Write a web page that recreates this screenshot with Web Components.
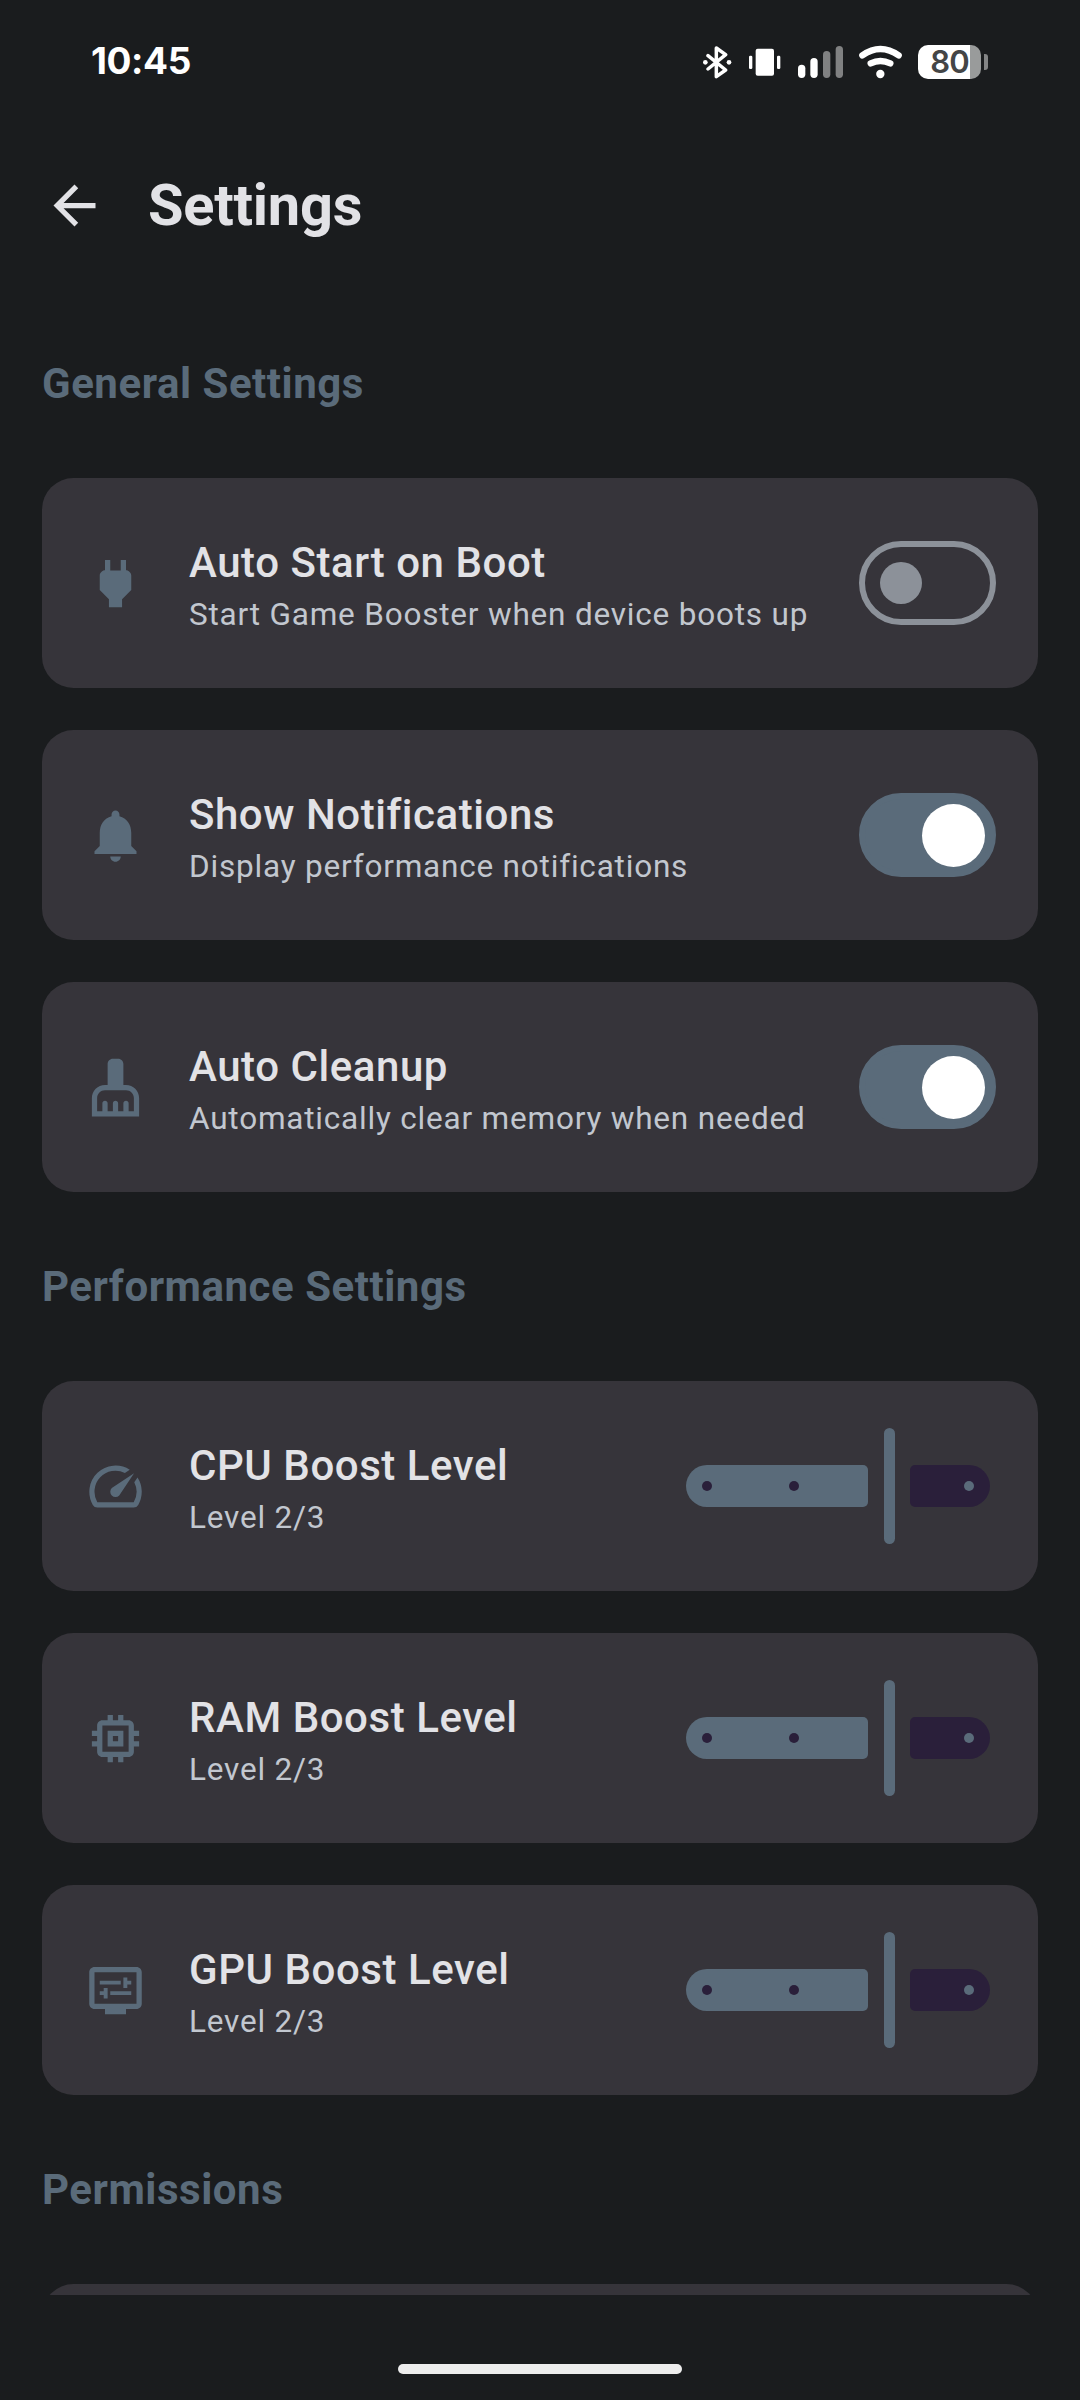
<!DOCTYPE html>
<html lang="en">
<head>
<meta charset="utf-8">
<title>Settings</title>
<style>
	body {
		margin: 0;
		background: #1a1c1e;
		font-family: Roboto, "Noto Sans", sans-serif;
		--primary: #5a6b7a;
		--surface: #1a1c1e;
		--card: #36343a;
		--text: #e2e2e6;
		--text-muted: #c2c7cf;
		--outline: #8c9199;
		--track: #2a1f3a;
	}
</style>
</head>
<body>
<settings-screen>
	<status-bar slot="status" time="10:45" battery="80"></status-bar>
	<app-bar slot="header">Settings</app-bar>

	<section-title>General Settings</section-title>
	<setting-card icon="power" label="Auto Start on Boot" detail="Start Game Booster when device boots up">
		<toggle-switch></toggle-switch>
	</setting-card>
	<setting-card icon="bell" label="Show Notifications" detail="Display performance notifications">
		<toggle-switch checked></toggle-switch>
	</setting-card>
	<setting-card icon="broom" label="Auto Cleanup" detail="Automatically clear memory when needed">
		<toggle-switch checked></toggle-switch>
	</setting-card>

	<section-title>Performance Settings</section-title>
	<setting-card icon="speed" label="CPU Boost Level" detail="Level 2/3">
		<level-slider></level-slider>
	</setting-card>
	<setting-card icon="memory" label="RAM Boost Level" detail="Level 2/3">
		<level-slider></level-slider>
	</setting-card>
	<setting-card icon="display" label="GPU Boost Level" detail="Level 2/3">
		<level-slider></level-slider>
	</setting-card>

	<section-title>Permissions</section-title>
	<setting-card></setting-card>
</settings-screen>

<script>
const ICONS = {
	back: "M20 11H7.83l5.59-5.59L12 4l-8 8 8 8 1.41-1.41L7.83 13H20v-2z",
	power: "M16.01 7L16 3h-2v4h-4V3H8v4h-.01C7 6.99 6 7.99 6 8.99v5.49L9.5 18v3h5v-3l3.5-3.51v-5.5c0-1-1-2-1.99-1.99z",
	bell: "M12 22c1.1 0 2-.9 2-2h-4c0 1.1.89 2 2 2zm6-6v-5c0-3.07-1.64-5.64-4.5-6.32V4c0-.83-.67-1.5-1.5-1.5s-1.5.67-1.5 1.5v.68C7.63 5.36 6 7.92 6 11v5l-2 2v1h16v-1l-2-2z",
	broom: "M16 11h-1V3c0-1.1-.9-2-2-2h-2c-1.1 0-2 .9-2 2v8H8c-2.76 0-5 2.24-5 5v7h18v-7c0-2.76-2.24-5-5-5zm3 10h-2v-3c0-.55-.45-1-1-1s-1 .45-1 1v3h-2v-3c0-.55-.45-1-1-1s-1 .45-1 1v3H9v-3c0-.55-.45-1-1-1s-1 .45-1 1v3H5v-5c0-1.65 1.35-3 3-3h8c1.65 0 3 1.35 3 3v5z",
	speed: "M20.38 8.57l-1.23 1.85a8 8 0 0 1-.22 7.58H5.07A8 8 0 0 1 15.58 6.85l1.85-1.23A10 10 0 0 0 3.35 19a2 2 0 0 0 1.72 1h13.85a2 2 0 0 0 1.74-1 10 10 0 0 0-.27-10.44zm-9.79 6.84a2 2 0 0 0 2.83 0l5.66-8.49-8.49 5.66a2 2 0 0 0 0 2.83z",
	memory: "M15 9H9v6h6V9zm-2 4h-2v-2h2v2zm8-2V9h-2V7c0-1.1-.9-2-2-2h-2V3h-2v2h-2V3H9v2H7c-1.1 0-2 .9-2 2v2H3v2h2v2H3v2h2v2c0 1.1.9 2 2 2h2v2h2v-2h2v2h2v-2h2c1.1 0 2-.9 2-2v-2h2v-2h-2v-2h2zm-4 6H7V7h10v10z",
	display: "M20 3H4c-1.1 0-2 .9-2 2v12c0 1.1.9 2 2 2h4v2h8v-2h4c1.1 0 2-.9 2-2V5c0-1.1-.9-2-2-2zm0 14H4V5h16v12zM6 8.25h8v1.5H6zM16.5 9.75H18v-1.5h-1.5V7H15v4h1.5zM10 12.25h8v1.5h-8zM7.5 15H9v-4H7.5v1.25H6v1.5h1.5z",
};

class SettingsIcon extends HTMLElement {
	constructor() {
		super();
		this.attachShadow({ mode: "open" });
	}

	connectedCallback() {
		this.shadowRoot.innerHTML = `
			<style>
				:host { display: block; flex: none; width: 63px; height: 63px; }
				svg { display: block; width: 100%; height: 100%; fill: currentColor; }
			</style>
			<svg viewBox="0 0 24 24"><path fill-rule="evenodd" d="${ICONS[this.getAttribute("name")]}"/></svg>
		`;
	}
}

class StatusBar extends HTMLElement {
	constructor() {
		super();
		this.attachShadow({ mode: "open" });
	}

	connectedCallback() {
		this.shadowRoot.innerHTML = `
			<style>
				:host {
					display: flex;
					justify-content: space-between;
					align-items: center;
					box-sizing: border-box;
					height: 121px;
					padding: 3px 92px 0 91px;
					color: #fff;
					font-family: Inter, Roboto, sans-serif;
				}
				.time { padding-bottom: 2px; font-size: 37px; font-weight: 650; line-height: 44px; letter-spacing: -0.4px; }
				.icons { display: flex; align-items: center; }
				svg { display: block; height: 34px; }
				.bluetooth { width: 30px; margin-right: 16.5px; }
				.vibrate { width: 33px; margin-right: 17px; }
				.signal { width: 45px; margin-right: 16px; }
				.wifi { width: 43px; margin-right: 16px; }
				.battery {
					display: flex;
					align-items: center;
					justify-content: center;
					box-sizing: border-box;
					width: 63px;
					height: 34px;
					border-radius: 10px;
					background: linear-gradient(to right, #fff 52px, #999b9b 52px);
					color: #444546;
					font-size: 31px;
					font-weight: 600;
					line-height: 34px;
					letter-spacing: -1px;
				}
				.nub { width: 4px; height: 16px; margin-left: 3px; border-radius: 0 3px 3px 0; background: #848586; }
			</style>
			<div class="time">${this.getAttribute("time")}</div>
			<div class="icons">
				<svg class="bluetooth" viewBox="66 75 90 102" fill="none" stroke="#fff" stroke-width="10.5" stroke-linejoin="round" stroke-linecap="round">
					<path d="M84 107l53 43-28 20V84l28 20-53 43"/>
					<circle cx="76" cy="127" r="7" fill="#fff" stroke="none"/>
					<circle cx="147" cy="127" r="7" fill="#fff" stroke="none"/>
				</svg>
				<svg class="vibrate" viewBox="205 75 99 102" fill="#fff">
					<rect x="228" y="86" width="55" height="81" rx="6"/>
					<rect x="208" y="107" width="10" height="40" rx="4"/>
					<rect x="292" y="107" width="10" height="40" rx="4"/>
				</svg>
				<svg class="signal" viewBox="354 75 135 102" fill="#fff">
					<rect x="354" y="134" width="22" height="40" rx="11"/>
					<rect x="391" y="114" width="22" height="60" rx="11"/>
					<rect x="429" y="93" width="22" height="81" rx="11" fill="#808182"/>
					<rect x="467" y="78" width="22" height="96" rx="11" fill="#808182"/>
				</svg>
				<svg class="wifi" viewBox="537 75 129 102" fill="none" stroke="#fff" stroke-width="19" stroke-linecap="round">
					<path d="M547 106q54-38 109 0M572 130q29-14 59 0"/>
					<circle cx="601" cy="162" r="12.5" fill="#fff" stroke="none"/>
				</svg>
				<div class="battery">${this.getAttribute("battery")}</div>
				<div class="nub"></div>
			</div>
		`;
	}
}

class AppBar extends HTMLElement {
	constructor() {
		super();
		this.attachShadow({ mode: "open" });
		this.shadowRoot.innerHTML = `
			<style>
				:host {
					display: flex;
					align-items: center;
					gap: 42px;
					height: 168px;
					padding-left: 43px;
					color: var(--text);
				}
				h1 { margin: 0; font-size: 57.75px; font-weight: 700; line-height: 73px; letter-spacing: -0.25px; }
			</style>
			<settings-icon name="back"></settings-icon>
			<h1><slot></slot></h1>
		`;
	}
}

class SectionTitle extends HTMLElement {
	constructor() {
		super();
		this.attachShadow({ mode: "open" });
		this.shadowRoot.innerHTML = `
			<style>
				:host { display: block; padding: 21px 0; color: var(--primary); }
				h2 { margin: 0; font-size: 42px; font-weight: 700; line-height: 63px; letter-spacing: 0.53px; }
			</style>
			<h2><slot></slot></h2>
		`;
	}
}

class SettingCard extends HTMLElement {
	constructor() {
		super();
		this.attachShadow({ mode: "open" });
	}

	connectedCallback() {
		const icon = this.getAttribute("icon");
		this.shadowRoot.innerHTML = `
			<style>
				:host {
					display: flex;
					align-items: center;
					flex: none;
					gap: 42px;
					box-sizing: border-box;
					height: 210px;
					padding: 0 42px;
					border-radius: 31.5px;
					background: var(--card);
				}
				settings-icon { color: var(--primary); }
				.text { flex: 1; min-width: 0; white-space: nowrap; }
				.label { color: var(--text); font-size: 42px; font-weight: 500; line-height: 63px; letter-spacing: 0.55px; }
				.detail { color: var(--text-muted); font-size: 31.5px; line-height: 42px; letter-spacing: 0.8px; }
			</style>
			${icon ? `<settings-icon name="${icon}"></settings-icon>` : ""}
			<div class="text">
				<div class="label">${this.getAttribute("label") || ""}</div>
				<div class="detail">${this.getAttribute("detail") || ""}</div>
			</div>
			<slot></slot>
		`;
	}
}

class ToggleSwitch extends HTMLElement {
	constructor() {
		super();
		this.attachShadow({ mode: "open" });
		this.shadowRoot.innerHTML = `
			<style>
				:host {
					display: flex;
					align-items: center;
					flex: none;
					box-sizing: border-box;
					width: 137px;
					height: 84px;
					padding: 0 15px;
					border: 6px solid var(--outline);
					border-radius: 42px;
				}
				.thumb { width: 42px; height: 42px; border-radius: 50%; background: var(--outline); }
				:host([checked]) {
					justify-content: flex-end;
					padding: 0 5px;
					border-color: var(--primary);
					background: var(--primary);
				}
				:host([checked]) .thumb { width: 63px; height: 63px; background: #fff; }
			</style>
			<div class="thumb"></div>
		`;
	}
}

class LevelSlider extends HTMLElement {
	constructor() {
		super();
		this.attachShadow({ mode: "open" });
		this.shadowRoot.innerHTML = `
			<style>
				:host { display: flex; align-items: center; flex: none; box-sizing: border-box; width: 315px; padding: 0 6px 0 5px; }
				.active, .rest { display: flex; align-items: center; box-sizing: border-box; height: 42px; }
				.active { width: 182px; gap: 76.8px; padding-left: 15.7px; border-radius: 21px 5px 5px 21px; background: var(--primary); }
				.rest { width: 80px; justify-content: flex-end; padding-right: 16px; border-radius: 5px 21px 21px 5px; background: var(--track); }
				.handle { width: 11px; height: 116px; margin: 0 15px 0 16px; border-radius: 6px; background: var(--primary); }
				i { width: 10.5px; height: 10.5px; border-radius: 50%; background: var(--track); }
				.rest i { background: var(--primary); }
			</style>
			<div class="active"><i></i><i></i></div>
			<div class="handle"></div>
			<div class="rest"><i></i></div>
		`;
	}
}

class SettingsScreen extends HTMLElement {
	constructor() {
		super();
		this.attachShadow({ mode: "open" });
		this.shadowRoot.innerHTML = `
			<style>
				:host { display: flex; flex-direction: column; height: 2400px; overflow: hidden; background: var(--surface); }
				main {
					display: flex;
					flex-direction: column;
					flex: 1;
					gap: 42px;
					min-height: 0;
					box-sizing: border-box;
					padding: 42px 42px 0;
					overflow: hidden;
				}
				nav { display: flex; justify-content: center; align-items: flex-end; flex: none; box-sizing: border-box; height: 105px; padding-bottom: 26px; }
				.pill { width: 284px; height: 10px; border-radius: 5px; background: #ededed; }
			</style>
			<slot name="status"></slot>
			<slot name="header"></slot>
			<main><slot></slot></main>
			<nav><div class="pill"></div></nav>
		`;
	}
}

customElements.define("settings-icon", SettingsIcon);
customElements.define("status-bar", StatusBar);
customElements.define("app-bar", AppBar);
customElements.define("section-title", SectionTitle);
customElements.define("setting-card", SettingCard);
customElements.define("toggle-switch", ToggleSwitch);
customElements.define("level-slider", LevelSlider);
customElements.define("settings-screen", SettingsScreen);
</script>
</body>
</html>
